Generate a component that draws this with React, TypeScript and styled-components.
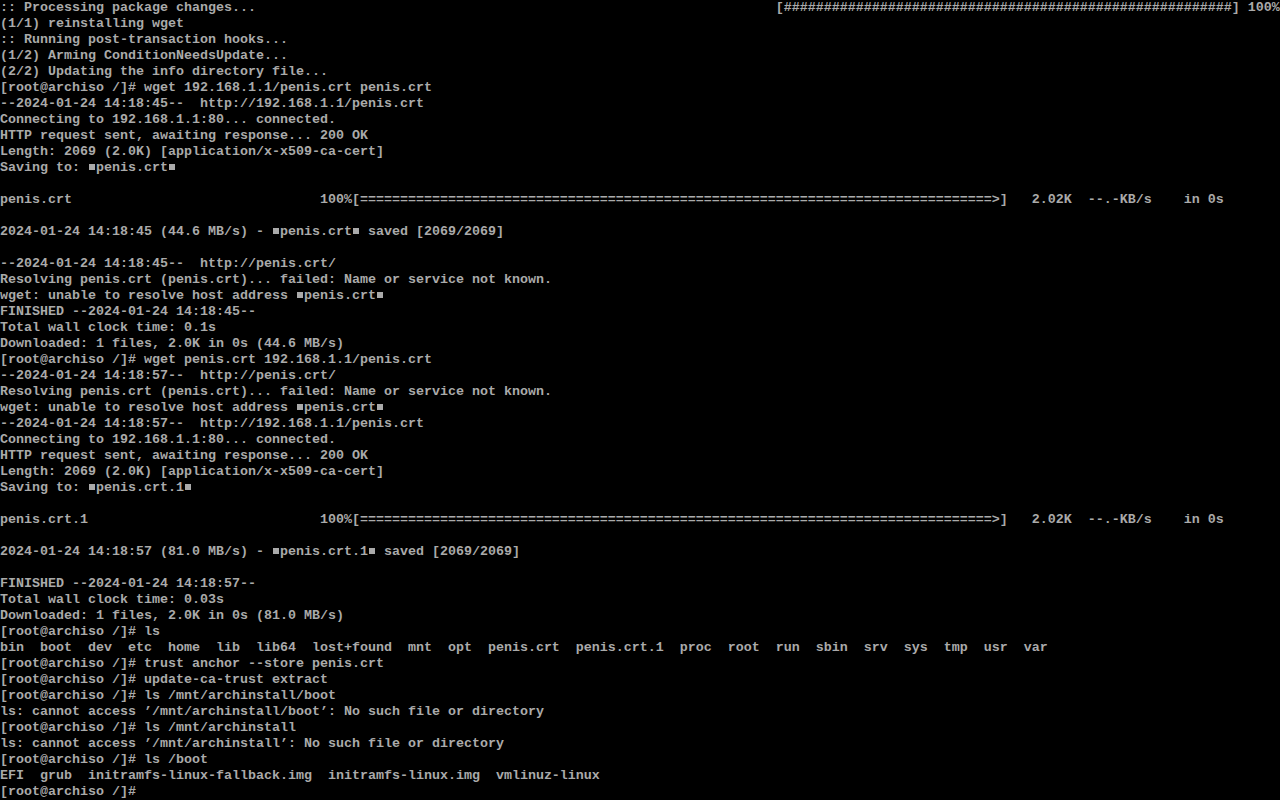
import React from "react";
import styled, { createGlobalStyle } from "styled-components";

const Global = createGlobalStyle`
  html, body {
    margin: 0;
    padding: 0;
    background: #000000;
    width: 1280px;
    height: 800px;
    overflow: hidden;
  }
`;

const Screen = styled.div`
  width: 1280px;
  height: 800px;
  background: #000000;
  color: #aaaaaa;
  font-family: "Liberation Mono", "DejaVu Sans Mono", monospace;
  font-size: 13.333px;
  font-weight: bold;
  display: flex;
  flex-direction: column;
  overflow: hidden;
`;

const Line = styled.div`
  height: 16px;
  line-height: 16px;
  white-space: pre;
  overflow: hidden;
`;

const Quote = styled.span`
  display: inline-block;
  width: 8px;
  height: 16px;
  vertical-align: top;
  position: relative;
  color: transparent;
  &::after {
    content: "";
    position: absolute;
    left: 1px;
    top: 4px;
    width: 6px;
    height: 6px;
    background: #aaaaaa;
  }
`;

const bar = "100%[" + "=".repeat(79) + ">]   2.02K  --.-KB/s    in 0s";
const pad = (s: string, n: number) => s + " ".repeat(Math.max(0, n - s.length));

const lines: string[] = [
  pad(":: Processing package changes...", 97) + "[" + "#".repeat(56) + "] 100%",
  "(1/1) reinstalling wget",
  ":: Running post-transaction hooks...",
  "(1/2) Arming ConditionNeedsUpdate...",
  "(2/2) Updating the info directory file...",
  "[root@archiso /]# wget 192.168.1.1/penis.crt penis.crt",
  "--2024-01-24 14:18:45--  http://192.168.1.1/penis.crt",
  "Connecting to 192.168.1.1:80... connected.",
  "HTTP request sent, awaiting response... 200 OK",
  "Length: 2069 (2.0K) [application/x-x509-ca-cert]",
  "Saving to: ■penis.crt■",
  "",
  pad("penis.crt", 40) + bar,
  "",
  "2024-01-24 14:18:45 (44.6 MB/s) - ■penis.crt■ saved [2069/2069]",
  "",
  "--2024-01-24 14:18:45--  http://penis.crt/",
  "Resolving penis.crt (penis.crt)... failed: Name or service not known.",
  "wget: unable to resolve host address ■penis.crt■",
  "FINISHED --2024-01-24 14:18:45--",
  "Total wall clock time: 0.1s",
  "Downloaded: 1 files, 2.0K in 0s (44.6 MB/s)",
  "[root@archiso /]# wget penis.crt 192.168.1.1/penis.crt",
  "--2024-01-24 14:18:57--  http://penis.crt/",
  "Resolving penis.crt (penis.crt)... failed: Name or service not known.",
  "wget: unable to resolve host address ■penis.crt■",
  "--2024-01-24 14:18:57--  http://192.168.1.1/penis.crt",
  "Connecting to 192.168.1.1:80... connected.",
  "HTTP request sent, awaiting response... 200 OK",
  "Length: 2069 (2.0K) [application/x-x509-ca-cert]",
  "Saving to: ■penis.crt.1■",
  "",
  pad("penis.crt.1", 40) + bar,
  "",
  "2024-01-24 14:18:57 (81.0 MB/s) - ■penis.crt.1■ saved [2069/2069]",
  "",
  "FINISHED --2024-01-24 14:18:57--",
  "Total wall clock time: 0.03s",
  "Downloaded: 1 files, 2.0K in 0s (81.0 MB/s)",
  "[root@archiso /]# ls",
  "bin  boot  dev  etc  home  lib  lib64  lost+found  mnt  opt  penis.crt  penis.crt.1  proc  root  run  sbin  srv  sys  tmp  usr  var",
  "[root@archiso /]# trust anchor --store penis.crt",
  "[root@archiso /]# update-ca-trust extract",
  "[root@archiso /]# ls /mnt/archinstall/boot",
  "ls: cannot access \u2019/mnt/archinstall/boot\u2019: No such file or directory",
  "[root@archiso /]# ls /mnt/archinstall",
  "ls: cannot access \u2019/mnt/archinstall\u2019: No such file or directory",
  "[root@archiso /]# ls /boot",
  "EFI  grub  initramfs-linux-fallback.img  initramfs-linux.img  vmlinuz-linux",
  "[root@archiso /]#",
];

function renderLine(text: string) {
  const parts = text.split("■");
  const out: React.ReactNode[] = [];
  parts.forEach((p, i) => {
    if (i > 0) out.push(<Quote key={"q" + i}>■</Quote>);
    if (p) out.push(p);
  });
  return out;
}

export default function App() {
  return (
    <>
      <Global />
      <Screen>
        {lines.map((l, i) => (
          <Line key={i}>{l ? renderLine(l) : " "}</Line>
        ))}
      </Screen>
    </>
  );
}
